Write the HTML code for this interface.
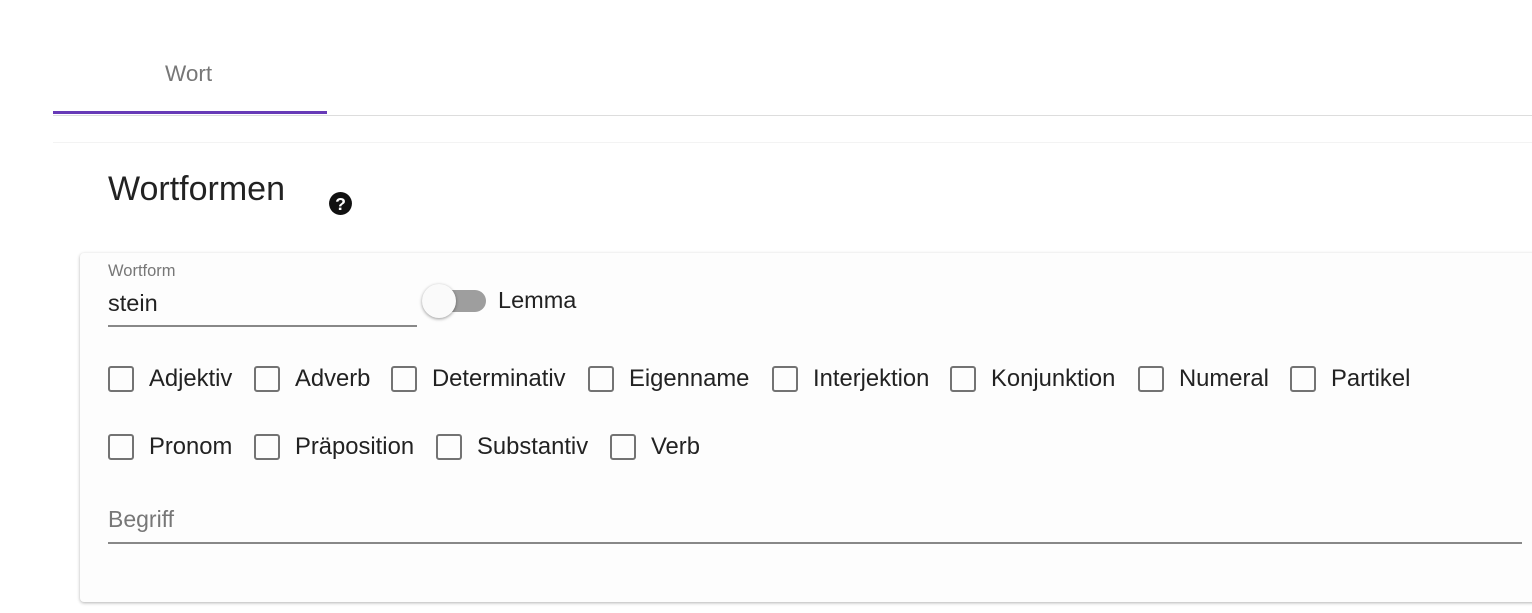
<!DOCTYPE html>
<html><head><style>
body{margin:0;width:1532px;height:613px;background:#fff;font-family:"Liberation Sans",sans-serif;position:relative;overflow:hidden}
.a{position:absolute}
.cb{position:absolute;width:22px;height:22px;border:2px solid #737373;border-radius:3px;box-sizing:content-box}
.lb{position:absolute;font-size:23.8px;color:#222;line-height:26px}
</style></head><body>
<div class="a" style="left:165px;top:61px;font-size:22.5px;color:#777">Wort</div>
<div class="a" style="left:53px;top:115px;width:1479px;height:1px;background:#ddd"></div>
<div class="a" style="left:53px;top:111px;width:274px;height:3px;background:#673ab7"></div>
<div class="a" style="left:53px;top:142px;width:1479px;height:1px;background:#f3f3f3"></div>
<div class="a" style="left:108px;top:170px;font-size:34px;color:#222">Wortformen</div>
<svg class="a" style="left:328px;top:191px" width="25" height="25" viewBox="0 0 24 24"><circle cx="12" cy="12" r="11" fill="#111"/><text x="12" y="18" text-anchor="middle" font-family="Liberation Sans" font-weight="bold" font-size="17" fill="#fff">?</text></svg>
<div class="a" style="left:80px;top:253px;width:1470px;height:349px;background:#fdfdfd;border-radius:4px;box-shadow:0 1px 3px rgba(0,0,0,.3)"></div>
<div class="a" style="left:108px;top:262px;font-size:16.5px;color:#777">Wortform</div>
<div class="a" style="left:108px;top:290px;font-size:23.5px;color:#222">stein</div>
<div class="a" style="left:108px;top:325px;width:309px;height:2px;background:#888"></div>
<div class="a" style="left:434px;top:290px;width:52px;height:22px;border-radius:11px;background:#9e9e9e"></div>
<div class="a" style="left:422px;top:284px;width:34px;height:34px;border-radius:50%;background:#fafafa;box-shadow:0 1px 3px rgba(0,0,0,.4)"></div>
<div class="a" style="left:498px;top:287px;font-size:23.5px;color:#222">Lemma</div>

<div class="cb" style="left:108px;top:366px"></div><div class="lb" style="left:149px;top:366px">Adjektiv</div>
<div class="cb" style="left:254px;top:366px"></div><div class="lb" style="left:295px;top:366px">Adverb</div>
<div class="cb" style="left:391px;top:366px"></div><div class="lb" style="left:432px;top:366px">Determinativ</div>
<div class="cb" style="left:588px;top:366px"></div><div class="lb" style="left:629px;top:366px">Eigenname</div>
<div class="cb" style="left:772px;top:366px"></div><div class="lb" style="left:813px;top:366px">Interjektion</div>
<div class="cb" style="left:950px;top:366px"></div><div class="lb" style="left:991px;top:366px">Konjunktion</div>
<div class="cb" style="left:1138px;top:366px"></div><div class="lb" style="left:1179px;top:366px">Numeral</div>
<div class="cb" style="left:1290px;top:366px"></div><div class="lb" style="left:1331px;top:366px">Partikel</div>

<div class="cb" style="left:108px;top:434px"></div><div class="lb" style="left:149px;top:434px">Pronom</div>
<div class="cb" style="left:254px;top:434px"></div><div class="lb" style="left:295px;top:434px">Präposition</div>
<div class="cb" style="left:436px;top:434px"></div><div class="lb" style="left:477px;top:434px">Substantiv</div>
<div class="cb" style="left:610px;top:434px"></div><div class="lb" style="left:651px;top:434px">Verb</div>

<div class="a" style="left:108px;top:506px;font-size:23px;color:#777">Begriff</div>
<div class="a" style="left:108px;top:542px;width:1414px;height:2px;background:#888"></div>
</body></html>
